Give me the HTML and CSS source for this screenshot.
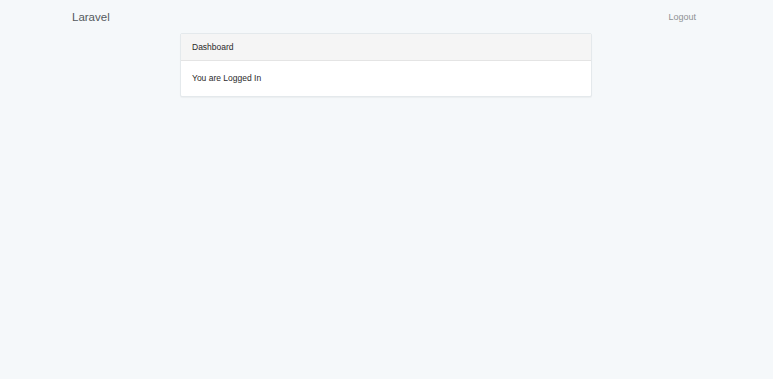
FILE: index.html
```html
<!DOCTYPE html>
<html lang="en">
<head>
    <meta charset="UTF-8">
    <meta name="viewport" content="width=device-width, initial-scale=1.0">
    <title>Laravel</title>
    <link rel="stylesheet" href="styles.css">
</head>
<body>

    <!-- Top Navigation -->
    <nav class="navbar">
        <div class="navbar-inner">
            <a class="brand" href="#">Laravel</a>
            <a class="nav-link" href="#">Logout</a>
        </div>
    </nav>

    <!-- Dashboard Panel -->
    <div class="content">
        <div class="panel">
            <div class="panel-heading">Dashboard</div>
            <div class="panel-body">You are Logged In</div>
        </div>
    </div>

</body>
</html>
```

FILE: styles.css
```css
* {
    margin: 0;
    padding: 0;
    box-sizing: border-box;
    font-family: "Liberation Sans", Arial, sans-serif;
}

body {
    background-color: #f5f8fa;
    color: #333;
    min-height: 379px;
}

a {
    text-decoration: none;
}

.navbar {
    height: 33px;
    background-color: #f5f8fa;
}

.navbar-inner {
    display: flex;
    align-items: center;
    justify-content: space-between;
    height: 100%;
    padding: 0 77px 0 72px;
}

.brand {
    font-size: 11.5px;
    color: #54595d;
}

.nav-link {
    font-size: 9px;
    color: #8f9294;
    margin-top: 1px;
}

.content {
    display: flex;
    justify-content: center;
    padding-right: 1px;
}

.panel {
    width: 412px;
    background-color: #fff;
    border: 1px solid #e4e9ec;
    border-radius: 2px;
    box-shadow: 0 1px 1px rgba(0, 0, 0, 0.04);
}

.panel-heading {
    height: 27px;
    padding: 0 11px;
    display: flex;
    align-items: center;
    font-size: 8.5px;
    background-color: #f5f5f5;
    border-bottom: 1px solid #e4e4e4;
    color: #2a2a2a;
}

.panel-body {
    height: 35px;
    padding: 0 11px 1px;
    display: flex;
    align-items: center;
    font-size: 8.5px;
    color: #2a2a2a;
}
```
